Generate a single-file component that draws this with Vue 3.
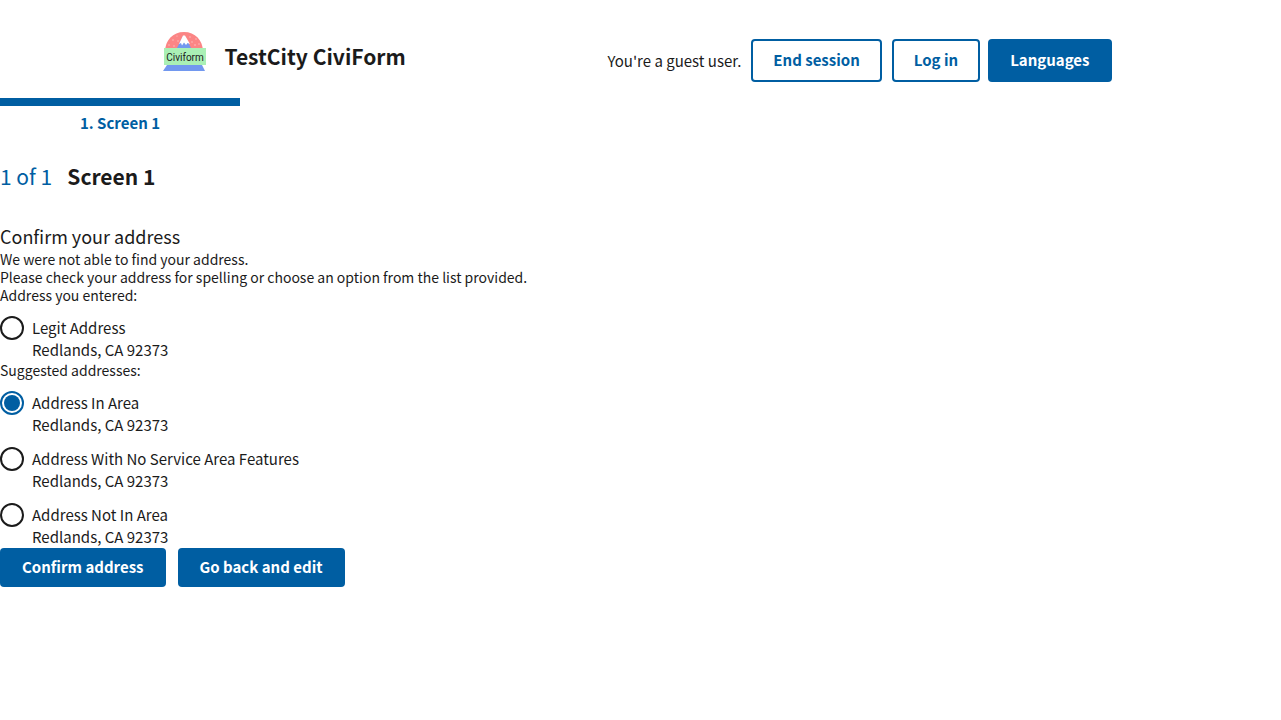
<script setup>
import { ref } from 'vue'

const entered = [
  { id: 'entered-0', street: 'Legit Address', city: 'Redlands, CA 92373' },
]
const suggestions = [
  { id: 'suggested-0', street: 'Address In Area', city: 'Redlands, CA 92373' },
  { id: 'suggested-1', street: 'Address With No Service Area Features', city: 'Redlands, CA 92373' },
  { id: 'suggested-2', street: 'Address Not In Area', city: 'Redlands, CA 92373' },
]
const groups = [
  { legend: 'Address you entered:', options: entered },
  { legend: 'Suggested addresses:', options: suggestions },
]
const selected = ref('suggested-0')
</script>

<template>
  <div class="page">
    <header class="header">
      <a class="brand" href="#">
        <svg class="logo" viewBox="0 0 44 40" aria-hidden="true">
          <path d="M2 20C2 8 10 0 21 0s19 8 19 20z" fill="#fb8585" />
          <g fill="#fdc4c4">
            <circle cx="6" cy="13" r="0.7" />
            <circle cx="10" cy="8" r="0.7" />
            <circle cx="11" cy="14" r="0.7" />
            <circle cx="15" cy="9" r="0.7" />
            <circle cx="14" cy="4" r="0.6" />
            <circle cx="27" cy="5" r="0.7" />
            <circle cx="29" cy="10" r="0.7" />
            <circle cx="33" cy="7" r="0.7" />
            <circle cx="32" cy="13" r="0.8" />
            <circle cx="36" cy="12" r="0.7" />
          </g>
          <path d="M13 18 20 4h2l7 14z" fill="#7298ef" />
          <path d="m16 12 4-8.500h2l5 8.500-2.500-1-1.500 2-2-2.500-2 3-1-2.500z" fill="#fff" />
          <path d="M4 33h35l3 6H0z" fill="#7298ef" />
          <path d="M1 16h42v17H1z" fill="#aaf0b5" />
          <text x="22" y="29" text-anchor="middle" class="logo-text">Civiform</text>
        </svg>
        <span class="brand-name">TestCity CiviForm</span>
      </a>
      <nav class="nav" aria-label="Account">
        <span class="guest">You're a guest user.</span>
        <button type="button" class="button outline">End session</button>
        <button type="button" class="button outline">Log in</button>
        <button type="button" class="button languages">Languages</button>
      </nav>
    </header>

    <main>
      <ol class="steps">
        <li class="step">1. Screen 1</li>
      </ol>
      <h1 class="heading"><span class="count">1 of 1</span><span>Screen 1</span></h1>

      <form @submit.prevent>
        <h2 class="title">Confirm your address</h2>
        <p class="note">We were not able to find your address.</p>
        <p class="note">Please check your address for spelling or choose an option from the list provided.</p>

        <fieldset v-for="group in groups" :key="group.legend" class="group">
          <legend class="legend">{{ group.legend }}</legend>
          <div v-for="option in group.options" :key="option.id" class="option">
            <input :id="option.id" v-model="selected" class="radio" type="radio" name="address" :value="option.id" />
            <label :for="option.id">{{ option.street }}<br />{{ option.city }}</label>
          </div>
        </fieldset>

        <div class="actions">
          <button type="submit" class="button">Confirm address</button>
          <button type="button" class="button">Go back and edit</button>
        </div>
      </form>
    </main>
  </div>
</template>

<style>
body {
  margin: 0;
  background: #fff;
}
</style>

<style scoped>
.page {
  color: #1b1b1b;
  font-family: "Noto Sans CJK SC", "Noto Sans", sans-serif;
  font-size: 15px;
  line-height: 22px;
}

.header {
  display: flex;
  align-items: flex-start;
  justify-content: space-between;
  box-sizing: border-box;
  max-width: 1024px;
  min-height: 98px;
  margin: 0 auto;
  padding: 32px 41px 16px 34px;
}

.brand {
  display: flex;
  align-items: flex-start;
  gap: 18px;
  color: inherit;
  text-decoration: none;
}

.logo {
  width: 44px;
  height: 40px;
}

.logo-text {
  font-family: Roboto, sans-serif;
  font-size: 10px;
  fill: #1b1b1b;
}

.brand-name {
  font-size: 21px;
  font-weight: 700;
  line-height: 48px;
}

.nav {
  display: flex;
  align-items: center;
  gap: 10px;
  padding-top: 7px;
}

.button {
  padding: 8px 22px 9px;
  border: 0;
  border-radius: 4px;
  background: #005ea2;
  color: #fff;
  font: inherit;
  font-weight: 700;
  cursor: pointer;
}

.nav .button {
  padding: 10px 22px 11px;
}

.nav .outline {
  padding: 8px 20px 9px;
  border: 2px solid #005ea2;
  background: #fff;
  color: #005ea2;
}

.nav .languages {
  margin-left: -2px;
}

.steps {
  display: flex;
  margin: 0;
  padding: 0;
  list-style: none;
}

.step {
  flex: 0 1 240px;
  padding-top: 6px;
  border-top: 8px solid #005ea2;
  color: #005ea2;
  font-weight: 700;
  text-align: center;
}

.heading {
  display: flex;
  gap: 15px;
  margin: 28px 0 0;
  font-size: 21px;
  font-weight: 700;
  line-height: 28px;
}

.count {
  color: #005ea2;
  font-weight: 400;
}

.title {
  margin: 32px 0 0;
  font-size: 18px;
  font-weight: 400;
  line-height: 28px;
}

.note {
  margin: 0;
  font-size: 14px;
  line-height: 18px;
}

.group {
  min-width: 0;
  margin: 0;
  padding: 0;
  border: 0;
}

.legend {
  padding: 0;
  font-size: 14px;
  line-height: 19px;
}

.option {
  display: flex;
  align-items: flex-start;
  gap: 8px;
  margin-top: 12px;
}

.radio {
  flex: none;
  box-sizing: border-box;
  width: 24px;
  height: 24px;
  margin: -1px 0 0;
  padding: 2px;
  border: 2px solid #1b1b1b;
  border-radius: 50%;
  appearance: none;
}

.radio:checked {
  border-color: #005ea2;
  background: #005ea2 content-box;
}

.actions {
  display: flex;
  gap: 12px;
}
</style>
